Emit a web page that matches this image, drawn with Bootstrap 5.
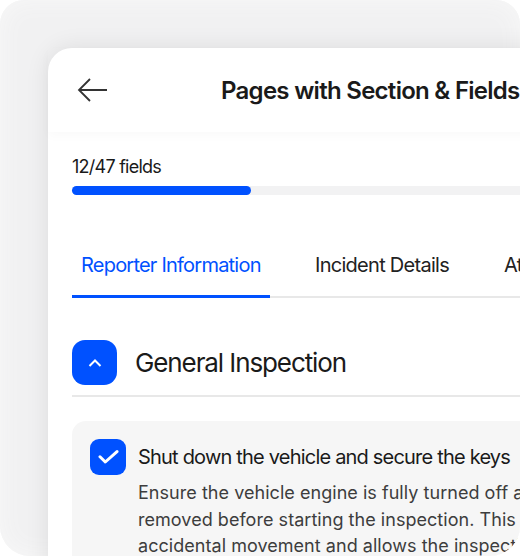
<!DOCTYPE html>
<html lang="en">
<head>
<meta charset="utf-8">
<title>Pages with Section &amp; Fields</title>
<link rel="stylesheet" href="https://cdn.jsdelivr.net/npm/bootstrap@5.3.0/dist/css/bootstrap.min.css">
<style>
html,body{width:520px;height:556px;overflow:hidden;background:#fff;font-family:Inter,"Liberation Sans",sans-serif;color:#1a1a1a}
.frame{width:520px;height:556px;overflow:hidden;background:#f1f1f2;border-radius:24px 24px 30px 30px;padding:48px 0 0 48px;box-shadow:inset 0 0 24px #f8f8f8}
.sheet{width:640px;height:640px;background:#fff;border-radius:24px 0 0 0;box-shadow:0 0 24px rgba(0,0,0,.09)}
.topbar{height:84px;padding:0 24px 0 29px;box-shadow:0 4px 10px rgba(0,0,0,.025)}
.topbar h1{font-size:24px;font-weight:600;margin:2px 0 0 112px;letter-spacing:-.72px;white-space:nowrap;line-height:28px}
.progress-wrap{padding:25px 0 0 24px}
.count{font-size:18px;line-height:20px;margin-bottom:9px;letter-spacing:-.75px}
.track{height:9px;background:#f2f2f3;border-radius:5px;width:592px}
.fill{height:9px;width:179px;background:#0051ff;border-radius:5px}
.tabs-row{margin:41px 0 0 24px;border-bottom:2px solid #e8e8e8;height:62px;width:592px}
.tab-item{font-size:20px;line-height:24px;padding-top:17px;height:62px;white-space:nowrap;letter-spacing:-.72px;color:#222}
.tab-item.on{color:#0051ff;border-bottom:3px solid #0051ff;width:198px;padding-left:9px;letter-spacing:-.78px}
.tab-second{margin-left:45px}
.tab-third{margin-left:55px}
.sec{margin:42px 0 0 24px;width:592px;border-bottom:2px solid #e8e8e8;height:57px;gap:18px;align-items:flex-start}
.chev{width:45px;height:45px;background:#0051ff;border-radius:13px}
.sec h2{font-size:26px;font-weight:400;line-height:46px;margin:0;letter-spacing:-1.1px}
.panel{margin:24px 0 0 24px;width:592px;background:#f6f6f6;border-radius:14px;padding:18px;gap:12px;height:200px}
.tick{width:36px;height:36px;background:#0051ff;border-radius:9px;flex:none}
.panel h3{font-size:20px;font-weight:400;line-height:24px;margin:6px 0 11px;letter-spacing:-.8px;white-space:nowrap}
.panel p{font-size:18px;line-height:26.5px;margin:0;color:#3d3d3d;white-space:nowrap;letter-spacing:.04px}
</style>
</head>
<body>
<div class="frame">
  <div class="sheet">
    <div class="topbar d-flex align-items-center">
      <svg width="32" height="26" viewBox="0 0 32 26" fill="none" stroke="#333" stroke-width="1.8"><path d="M30 13H2M13 2 2 13l11 11"/></svg>
      <h1>Pages with Section &amp; Fields</h1>
    </div>
    <div class="progress-wrap">
      <div class="count">12/47 fields</div>
      <div class="track"><div class="fill"></div></div>
    </div>
    <div class="tabs-row d-flex">
      <div class="tab-item on">Reporter Information</div>
      <div class="tab-item tab-second">Incident Details</div>
      <div class="tab-item tab-third">Attachments</div>
    </div>
    <div class="sec d-flex">
      <div class="chev d-flex align-items-center justify-content-center">
        <svg width="14" height="9" viewBox="0 0 14 9" fill="none" stroke="#fff" stroke-width="2"><path d="M1.5 8 7 2.5 12.5 8"/></svg>
      </div>
      <h2>General Inspection</h2>
    </div>
    <div class="panel d-flex">
      <div class="tick d-flex align-items-center justify-content-center">
        <svg width="21" height="16" viewBox="0 0 21 16" fill="none" stroke="#fff" stroke-width="3" stroke-linecap="round" stroke-linejoin="round"><path d="M2 7.8 7.3 13 19 2.6"/></svg>
      </div>
      <div>
        <h3>Shut down the vehicle and secure the keys</h3>
        <p>Ensure the vehicle engine is fully turned off and keys are<br>removed before starting the inspection. This prevents<br>accidental movement and allows the inspection to proceed</p>
      </div>
    </div>
  </div>
</div>
<script src="https://cdn.jsdelivr.net/npm/bootstrap@5.3.0/dist/js/bootstrap.bundle.min.js"></script>
</body>
</html>
